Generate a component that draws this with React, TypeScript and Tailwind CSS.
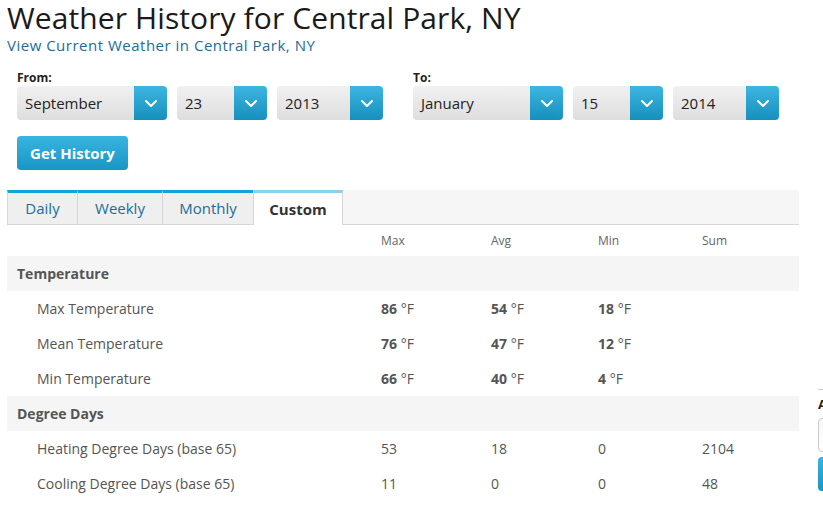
import React from "react";

const font = { fontFamily: '"Open Sans", "Liberation Sans", sans-serif' };

function Chevron() {
  return (
    <svg width="14" height="9" viewBox="0 0 14 9" fill="none">
      <path d="M2 2 L7 7 L12 2" stroke="white" strokeWidth="2" strokeLinecap="round" strokeLinejoin="round" />
    </svg>
  );
}

function Select({ value, w }: { value: string; w: string }) {
  return (
    <div className={`flex h-[34px] ${w} overflow-hidden rounded-[4px]`}>
      <div className="flex flex-1 items-center bg-gradient-to-b from-[#f1f1f1] to-[#dedede] pl-[8px] text-[15px] text-[#222]">
        {value}
      </div>
      <div className="flex w-[33px] items-center justify-center bg-gradient-to-b from-[#3cb6e2] to-[#148fbd]">
        <Chevron />
      </div>
    </div>
  );
}

function DateGroup({ label, m, d, y }: { label: string; m: string; d: string; y: string }) {
  return (
    <div className="flex flex-col">
      <div className="h-[14px] text-[12px] font-bold leading-[14px] text-[#222]">{label}</div>
      <div className="mt-[1px] flex gap-[10px]">
        <Select value={m} w="w-[150px]" />
        <Select value={d} w="w-[90px]" />
        <Select value={y} w="w-[106px]" />
      </div>
    </div>
  );
}

const tabs = [
  { name: "Daily", w: "w-[71px]" },
  { name: "Weekly", w: "w-[86px]" },
  { name: "Monthly", w: "w-[92px]" },
];

function Val({ n, unit }: { n: string; unit?: boolean }) {
  return (
    <div>
      {unit ? (
        <>
          <span className="font-bold">{n}</span> °F
        </>
      ) : (
        n
      )}
    </div>
  );
}

const grid = "grid grid-cols-[374px_110px_107px_104px_1fr] items-center";

export default function App() {
  return (
    <div className="flex w-[823px] h-[510px] overflow-hidden bg-white" style={font}>
      <div className="w-[811px] shrink-0 pl-[7px]">
        <h1 className="pt-[1px] text-[30px] leading-[34px] tracking-[0.1px] text-[#1a1a1a]">Weather History for Central Park, NY</h1>
        <a className="mt-[1px] block text-[15px] leading-[18px] tracking-[0.5px] text-[#1d6c9c]">View Current Weather in Central Park, NY</a>
        <div className="mt-[17px] flex gap-[30px] pl-[10px]">
          <DateGroup label="From:" m="September" d="23" y="2013" />
          <DateGroup label="To:" m="January" d="15" y="2014" />
        </div>
        <div className="ml-[10px] mt-[16px] flex h-[34px] w-[111px] items-center justify-center rounded-[4px] bg-gradient-to-b from-[#37b4e0] to-[#1896c6] text-[15px] font-bold text-white">
          Get History
        </div>
        <div className="mt-[20px] flex h-[35px] w-[792px] bg-[#f6f6f6] border-b border-[#d6d6d6]">
          {tabs.map((t) => (
            <div
              key={t.name}
              className={`flex ${t.w} items-center justify-center border-t-[3px] border-t-[#11a3da] border-l border-r border-r-[#d6d6d6] border-l-[#d6d6d6] bg-[#efefef] text-[15px] text-[#1d6c9c] -mr-[1px]`}
            >
              {t.name}
            </div>
          ))}
          <div className="-mb-[1px] flex w-[90px] items-center justify-center border-t-[3px] border-t-[#8ed0ea] border-l border-r border-l-[#d6d6d6] border-r-[#d6d6d6] bg-white text-[15px] font-bold text-[#333]">
            Custom
          </div>
        </div>
        <div className={`${grid} h-[31px] w-[792px] text-[12px] text-[#666]`}>
          <div />
          <div>Max</div>
          <div>Avg</div>
          <div>Min</div>
          <div>Sum</div>
        </div>
        <div className="w-[792px] text-[14px] text-[#555]">
          <div className="flex h-[35px] items-center bg-[#f5f5f5] pl-[10px] font-bold">Temperature</div>
          <div className={`${grid} h-[35px]`}>
            <div className="pl-[30px]">Max Temperature</div>
            <Val n="86" unit />
            <Val n="54" unit />
            <Val n="18" unit />
            <div />
          </div>
          <div className={`${grid} h-[35px]`}>
            <div className="pl-[30px]">Mean Temperature</div>
            <Val n="76" unit />
            <Val n="47" unit />
            <Val n="12" unit />
            <div />
          </div>
          <div className={`${grid} h-[35px]`}>
            <div className="pl-[30px]">Min Temperature</div>
            <Val n="66" unit />
            <Val n="40" unit />
            <Val n="4" unit />
            <div />
          </div>
          <div className="flex h-[35px] items-center bg-[#f5f5f5] pl-[10px] font-bold">Degree Days</div>
          <div className={`${grid} h-[35px]`}>
            <div className="pl-[30px]">Heating Degree Days (base 65)</div>
            <Val n="53" />
            <Val n="18" />
            <Val n="0" />
            <Val n="2104" />
          </div>
          <div className={`${grid} h-[35px]`}>
            <div className="pl-[30px]">Cooling Degree Days (base 65)</div>
            <Val n="11" />
            <Val n="0" />
            <Val n="0" />
            <Val n="48" />
          </div>
        </div>
      </div>
      <div className="w-[200px] shrink-0 pl-[7px] pt-[389px]">
        <div className="border-t border-[#cccccc] pt-[6px] text-[13px] font-bold leading-[16px] text-[#222]">A</div>
        <div className="mt-[6px] h-[34px] w-[150px] rounded-[4px] border border-[#cccccc] bg-gradient-to-b from-[#f6f6f6] to-[#ffffff]" />
        <div className="mt-[5px] h-[34px] w-[120px] rounded-[4px] bg-gradient-to-b from-[#37b4e0] to-[#1896c6]" />
      </div>
    </div>
  );
}
